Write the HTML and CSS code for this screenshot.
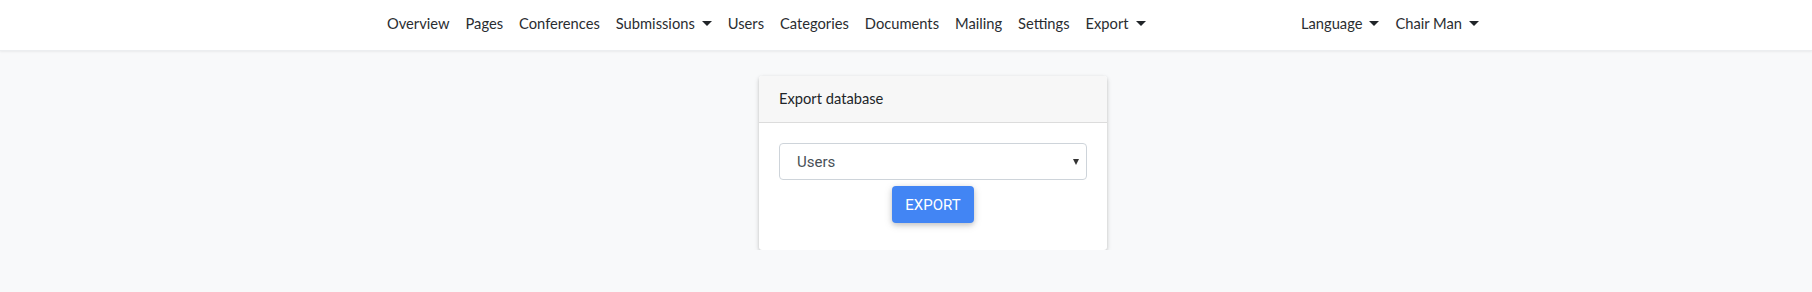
FILE: index.html
```html
<!DOCTYPE html>
<html lang="en">
<head>
    <meta charset="UTF-8">
    <title>Export</title>
    <link rel="stylesheet" href="styles.css">
</head>
<body>
    <!-- Barra de navegação -->
    <nav class="navbar">
        <ul class="nav-left">
            <li><a href="#">Overview</a></li>
            <li><a href="#">Pages</a></li>
            <li><a href="#">Conferences</a></li>
            <li><a href="#" class="dropdown">Submissions</a></li>
            <li><a href="#">Users</a></li>
            <li><a href="#">Categories</a></li>
            <li><a href="#">Documents</a></li>
            <li><a href="#">Mailing</a></li>
            <li><a href="#">Settings</a></li>
            <li><a href="#" class="dropdown">Export</a></li>
        </ul>
        <ul class="nav-right">
            <li><a href="#" class="dropdown">Language</a></li>
            <li><a href="#" class="dropdown">Chair Man</a></li>
        </ul>
    </nav>

    <main class="content">
        <div class="card">
            <div class="card-header">Export database</div>
            <div class="card-body">
                <div class="select-box">
                    <span>Users</span>
                    <span class="select-arrow"></span>
                </div>
                <button class="btn-export">EXPORT</button>
            </div>
        </div>
    </main>
</body>
</html>
```

FILE: styles.css
```css
body {
    margin: 0;
    background-color: #f8f9fa;
    font-family: Lato, "Noto Sans", sans-serif;
    color: #212529;
}
.navbar {
    display: flex;
    justify-content: space-between;
    align-items: flex-start;
    height: 51px;
    background-color: #fff;
    box-shadow: 0 1px 2px rgba(0, 0, 0, 0.06);
    border-bottom: 1px solid #eceef0;
    box-sizing: border-box;
    padding: 6px 325px 0 379px;
}
.navbar ul {
    display: flex;
    list-style: none;
    margin: 0;
    padding: 0;
}
.navbar a {
    display: block;
    padding: 8px 8px;
    font-size: 14.7px;
    color: #2a2d31;
    text-decoration: none;
}
.dropdown::after {
    content: "";
    display: inline-block;
    margin-left: 7px;
    vertical-align: 3px;
    border-top: 5px solid #212529;
    border-left: 5px solid transparent;
    border-right: 5px solid transparent;
}
.content {
    display: flex;
    justify-content: center;
    padding-top: 25px;
}
.card {
    width: 348px;
    margin-left: 54px;
    background-color: #fff;
    border-radius: 3px;
    box-shadow: 0 2px 5px rgba(0, 0, 0, 0.16), 0 1px 3px rgba(0, 0, 0, 0.1);
    overflow: hidden;
}
.card-header {
    height: 47px;
    box-sizing: border-box;
    padding: 13px 20px;
    font-size: 14.7px;
    background-color: #f7f7f7;
    border-bottom: 1px solid #dcdcdc;
}
.card-body {
    display: flex;
    flex-direction: column;
    align-items: center;
    padding: 20px 20px 27px;
}
.select-box {
    display: flex;
    align-items: center;
    justify-content: space-between;
    width: 100%;
    height: 37px;
    box-sizing: border-box;
    padding: 0 7px 0 17px;
    border: 1px solid #ced4da;
    border-radius: 4px;
    font-family: Roboto, sans-serif;
    font-size: 15px;
    color: #495057;
}
.select-arrow {
    border-top: 6px solid #333;
    border-left: 3px solid transparent;
    border-right: 3px solid transparent;
}
.btn-export {
    margin-top: 6px;
    width: 82px;
    height: 37px;
    border: none;
    border-radius: 4px;
    background-color: #4285f4;
    color: #fff;
    font-family: Roboto, sans-serif;
    font-size: 15px;
    box-shadow: 0 2px 5px rgba(0, 0, 0, 0.16), 0 2px 10px rgba(0, 0, 0, 0.12);
    cursor: pointer;
}
```
